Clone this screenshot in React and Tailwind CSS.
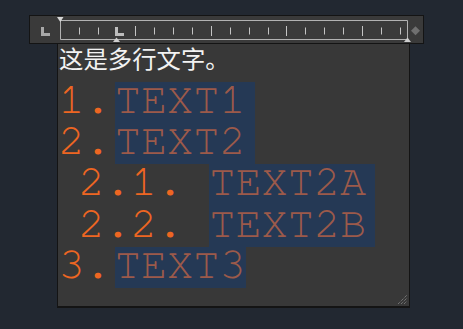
const MONO = { fontFamily: '"Nimbus Mono PS", "Nimbus Mono L", FreeMono, "Courier New", "Liberation Mono", monospace' }

const ROWS = [
  { num: '1.', text: 'TEXT1', level: 1, nl: true },
  { num: '2.', text: 'TEXT2', level: 1, nl: true },
  { num: '2.1.', text: 'TEXT2A', level: 2, nl: true },
  { num: '2.2.', text: 'TEXT2B', level: 2, nl: true },
  { num: '3.', text: 'TEXT3', level: 1, nl: false },
]

const TICKS = Array.from({ length: 18 }, (_, i) => i + 1).filter((k) => k !== 3)

function Ruler() {
  return (
    <div className="relative ml-[29px] w-[395px] h-[29px] bg-[#3a3a3a] border border-[#141414]">
      <svg
        className="absolute -left-px -top-px overflow-visible"
        width="395"
        height="29"
        viewBox="29 15 395 29"
      >
        {/* frame */}
        <path d="M60.5 20.5 H407.5 V39.5 H60.5 Z" fill="none" stroke="#b2b2b2" strokeWidth="1" />
        {/* ticks */}
        {TICKS.map((k) => {
          const x = Math.round(60 + 18.87 * k) + 0.5
          const major = k % 4 === 0
          return (
            <line
              key={k}
              x1={x}
              x2={x}
              y1={major ? 26 : 27.5}
              y2={major ? 36 : 34.5}
              stroke="#c4c4c4"
              strokeWidth="1"
            />
          )
        })}
        {/* tab type marker */}
        <path d="M41 27 h3 v6 h6 v3 h-9 Z" fill="#a8a8a8" />
        {/* tab stop */}
        <path d="M115 27 h3 v6 h6 v3 h-9 Z" fill="#bdbdbd" />
        {/* first line indent */}
        <path d="M57 17 H63.5 L60.25 22 Z" fill="#d6d6d6" />
        {/* hanging indent */}
        <path d="M113 42 H120 L116.5 37.5 Z" fill="#cfcfcf" />
        {/* right indent */}
        <path d="M404 42 H411 L407.5 37.5 Z" fill="#cfcfcf" />
        {/* width handle */}
        <path d="M411 30.7 L415.5 26.2 L420 30.7 L415.5 35.2 Z" fill="#707070" />
      </svg>
    </div>
  )
}

function ListRow({ num, text, level, nl }) {
  return (
    <div className="flex items-start h-[41.4px] text-[43.6px]" style={MONO}>
      {level === 1 ? (
        <span className="w-[56.3px] shrink-0 leading-[36px] text-[#ee6622] -ml-[0.5px]">{num}</span>
      ) : (
        <span className="w-[150.3px] shrink-0 pl-[19.5px] leading-[36px] text-[#ee6622]">{num}</span>
      )}
      <span className={`h-full leading-[36px] bg-[#253955] text-[#9c5a4a] ${nl ? 'pr-[9px]' : ''}`}>
        {text}
      </span>
    </div>
  )
}

export default function App() {
  return (
    <div className="min-h-screen bg-[#222831] pt-[15px]">
      <Ruler />

      {/* editor */}
      <div className="relative ml-[57px] w-[353px] h-[264px] bg-[#383838] border-x border-b-2 border-[#141414] pl-[1px]">
        <div
          className="h-[37.5px] text-[24.4px] leading-[28px] text-[#f2f2f2]"
          style={{ fontFamily: '"Noto Sans CJK SC", "Noto Sans", sans-serif' }}
        >
          这是多行文字。
        </div>
        {ROWS.map((r) => (
          <ListRow key={r.num} {...r} />
        ))}

        {/* resize grip */}
        <svg className="absolute right-[1px] bottom-[1px]" width="11" height="11" viewBox="0 0 11 11">
          <path d="M1 10 L10 1 M4 10 L10 4 M7 10 L10 7" stroke="#8a8a8a" strokeWidth="1" strokeDasharray="1 1" />
        </svg>
      </div>
    </div>
  )
}
